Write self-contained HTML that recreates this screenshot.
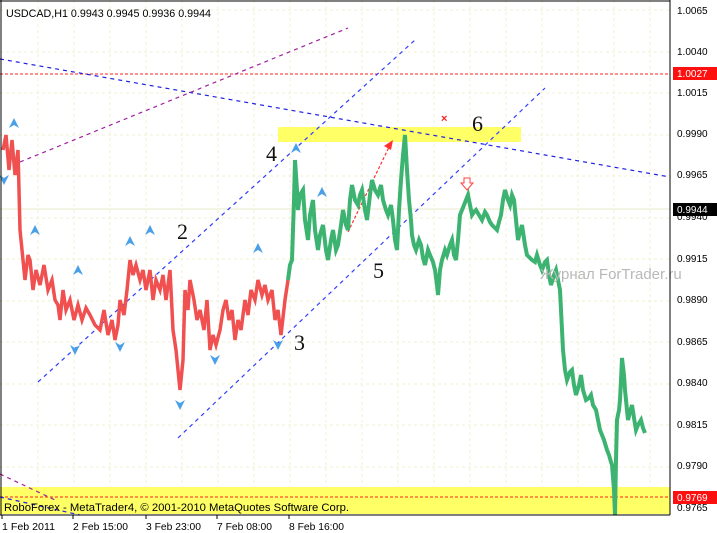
<!DOCTYPE html><html><head><style>
body{margin:0;background:#fff;}
svg{display:block;font-family:"Liberation Sans",sans-serif;}
</style></head><body>
<svg width="717" height="533" viewBox="0 0 717 533">
<rect x="0" y="0" width="717" height="533" fill="#fff"/>
<g stroke="#f0f0d0" stroke-dasharray="3,3" stroke-width="1">
<line x1="38" y1="0" x2="38" y2="515"/><line x1="74" y1="0" x2="74" y2="515"/><line x1="110" y1="0" x2="110" y2="515"/><line x1="146" y1="0" x2="146" y2="515"/><line x1="182" y1="0" x2="182" y2="515"/><line x1="218" y1="0" x2="218" y2="515"/><line x1="254" y1="0" x2="254" y2="515"/><line x1="290" y1="0" x2="290" y2="515"/><line x1="326" y1="0" x2="326" y2="515"/><line x1="362" y1="0" x2="362" y2="515"/><line x1="398" y1="0" x2="398" y2="515"/><line x1="434" y1="0" x2="434" y2="515"/><line x1="470" y1="0" x2="470" y2="515"/><line x1="506" y1="0" x2="506" y2="515"/><line x1="542" y1="0" x2="542" y2="515"/><line x1="578" y1="0" x2="578" y2="515"/><line x1="614" y1="0" x2="614" y2="515"/><line x1="650" y1="0" x2="650" y2="515"/>
<line x1="0" y1="10" x2="670" y2="10"/><line x1="0" y1="52" x2="670" y2="52"/><line x1="0" y1="93" x2="670" y2="93"/><line x1="0" y1="135" x2="670" y2="135"/><line x1="0" y1="176" x2="670" y2="176"/><line x1="0" y1="218" x2="670" y2="218"/><line x1="0" y1="259" x2="670" y2="259"/><line x1="0" y1="301" x2="670" y2="301"/><line x1="0" y1="342" x2="670" y2="342"/><line x1="0" y1="384" x2="670" y2="384"/><line x1="0" y1="425" x2="670" y2="425"/><line x1="0" y1="467" x2="670" y2="467"/>
</g>
<rect x="278" y="127" width="243" height="15" fill="#ffff66"/>
<rect x="0" y="487" width="670" height="27" fill="#ffff66"/>
<line x1="0" y1="74" x2="670" y2="74" stroke="#ff2020" stroke-dasharray="3,2"/>
<line x1="0" y1="497" x2="670" y2="497" stroke="#ff2020" stroke-dasharray="3,2"/>
<line x1="0" y1="209" x2="670" y2="209" stroke="#e8e8c8"/>
<g fill="none" stroke-dasharray="4,4" stroke-width="1.2">
<line x1="0" y1="59" x2="670" y2="177" stroke="#2020e0"/>
<line x1="20" y1="162" x2="348" y2="28" stroke="#a020a0"/>
<line x1="0" y1="474" x2="55" y2="500" stroke="#a020a0"/>
<line x1="38" y1="382" x2="415" y2="40" stroke="#3040ff"/>
<line x1="178" y1="438" x2="545" y2="88" stroke="#3040ff"/>
<line x1="0" y1="497" x2="80" y2="515" stroke="#2020e0"/>
</g>
<line x1="348" y1="232" x2="390" y2="145" stroke="#ff3030" stroke-dasharray="3,2" stroke-width="1.2"/>
<polygon points="393,140 384,146 391,150" fill="#ff3030"/>
<polyline fill="none" stroke="#f05050" stroke-width="3.5" points="3,150 6,135 9,170 12,140 15,175 18,150 20,230 23,260 25,280 28,255 30,260 33,290 36,270 40,285 44,265 48,290 52,280 55,300 58,305 60,320 63,290 66,310 70,300 74,320 78,305 82,320 86,308 90,315 95,325 100,330 104,310 108,335 112,320 115,340 118,325 120,300 124,315 127,290 130,260 133,275 136,265 140,280 143,270 146,290 150,270 153,300 156,280 160,290 163,275 166,300 170,270 173,330 176,350 180,390 183,360 185,290 188,310 190,280 194,300 197,320 200,310 204,330 207,300 210,350 213,335 216,345 220,330 223,310 226,300 229,320 232,310 235,340 238,320 241,330 245,300 248,315 251,290 255,300 258,280 262,295 265,285 268,300 272,290 275,320 278,310 281,335 285,300 288,280"/>
<polyline fill="none" stroke="#3cb371" stroke-width="4" points="288,280 290,265 292,260 294,200 295,160 297,190 298,210 300,195 303,190 305,220 308,240 310,215 313,200 315,230 318,250 320,235 323,225 326,250 328,260 331,240 333,230 336,250 338,245 341,225 343,210 346,225 348,230 350,200 352,185 355,200 358,205 360,195 362,190 365,210 367,220 370,195 372,180 375,190 378,195 381,185 383,200 386,210 388,215 391,205 393,220 395,240 397,250 399,210 401,180 403,155 405,135 407,170 409,200 411,220 412,235 414,245 416,250 419,240 421,245 423,258 425,265 428,250 430,255 433,262 435,270 437,285 438,295 440,270 442,260 445,250 447,255 450,245 452,240 454,255 456,260 458,240 460,215 462,210 464,205 466,200 468,195 470,205 472,215 474,212 476,210 479,215 482,220 485,212 487,215 490,222 492,225 495,228 497,230 499,222 501,215 503,200 505,190 508,200 510,205 512,195 514,200 516,220 518,240 520,232 522,225 525,245 527,255 530,258 532,260 535,262 537,255 540,265 542,270 545,262 547,260 549,275 551,285 554,275 556,270 558,280 560,290 562,330 563,350 565,370 567,380 570,372 572,370 574,385 576,395 579,385 581,375 583,390 586,400 589,398 591,395 593,405 596,410 598,420 600,430 602,435 604,440 607,450 609,455 611,462 612,465 614,490 615,515 616,460 617,420 619,410 620,400 621,380 622,358 624,375 625,390 627,410 628,420 630,412 632,405 634,418 636,430 638,425 641,420 643,428 645,433"/>
<g fill="#4aa0e8">
<path d="M14,118 l-5,10 5,-3 5,3z"/><path d="M296,143 l-5,10 5,-3 5,3z"/><path d="M322,187 l-5,10 5,-3 5,3z"/><path d="M150,225 l-5,10 5,-3 5,3z"/><path d="M130,236 l-5,10 5,-3 5,3z"/><path d="M78,265 l-5,10 5,-3 5,3z"/><path d="M35,225 l-5,10 5,-3 5,3z"/><path d="M258,243 l-5,10 5,-3 5,3z"/>
<path d="M4,185 l-5,-10 5,3 5,-3z"/><path d="M75,355 l-5,-10 5,3 5,-3z"/><path d="M180,410 l-5,-10 5,3 5,-3z"/><path d="M278,350 l-5,-10 5,3 5,-3z"/><path d="M215,365 l-5,-10 5,3 5,-3z"/><path d="M120,352 l-5,-10 5,3 5,-3z"/>
</g>
<path d="M464,178 h6 v5 h3 l-6,7 -6,-7 h3z" fill="#fff" stroke="#ff4040"/>
<text x="441" y="122" fill="#ff2020" font-size="11" font-weight="bold">×</text>
<g font-family="'Liberation Serif',serif" font-size="22" fill="#111">
<text x="177" y="239">2</text><text x="266" y="161">4</text><text x="294" y="350">3</text><text x="373" y="278">5</text><text x="472" y="131">6</text>
</g>
<text x="540" y="279" font-size="15" fill="#b8b8b8">Журнал ForTrader.ru</text>
<text x="6" y="17" font-size="11" fill="#000" textLength="205" lengthAdjust="spacingAndGlyphs">USDCAD,H1  0.9943 0.9945 0.9936 0.9944</text>
<text x="4" y="511" font-size="11" fill="#000" textLength="345" lengthAdjust="spacingAndGlyphs">RoboForex - MetaTrader4, © 2001-2010 MetaQuotes Software Corp.</text>
<line x1="670" y1="0" x2="670" y2="515" stroke="#000"/>
<line x1="0" y1="515" x2="670" y2="515" stroke="#000"/>
<line x1="1" y1="0" x2="1" y2="515" stroke="#000"/>
<line x1="0" y1="1" x2="670" y2="1" stroke="#000"/>
<g font-size="10" fill="#000">
<text x="677" y="14">1.0065</text><text x="677" y="55">1.0040</text><text x="677" y="96">1.0015</text><text x="677" y="137">0.9990</text><text x="677" y="178">0.9965</text><text x="677" y="220">0.9940</text><text x="677" y="262">0.9915</text><text x="677" y="303">0.9890</text><text x="677" y="345">0.9865</text><text x="677" y="386">0.9840</text><text x="677" y="428">0.9815</text><text x="677" y="469">0.9790</text><text x="677" y="511">0.9765</text>
<text x="2" y="530" textLength="53" lengthAdjust="spacingAndGlyphs">1 Feb 2011</text><text x="73" y="530" textLength="55" lengthAdjust="spacingAndGlyphs">2 Feb 15:00</text><text x="146" y="530" textLength="55" lengthAdjust="spacingAndGlyphs">3 Feb 23:00</text><text x="217" y="530" textLength="55" lengthAdjust="spacingAndGlyphs">7 Feb 08:00</text><text x="289" y="530" textLength="55" lengthAdjust="spacingAndGlyphs">8 Feb 16:00</text>
</g>
<rect x="673" y="67" width="44" height="13" fill="#ff1010"/>
<text x="677" y="77" font-size="10" fill="#fff">1.0027</text>
<rect x="673" y="203" width="44" height="13" fill="#000"/>
<text x="677" y="213" font-size="10" fill="#fff">0.9944</text>
<rect x="673" y="491" width="44" height="13" fill="#ff1010"/>
<text x="677" y="501" font-size="10" fill="#fff">0.9769</text>
<g stroke="#000"><line x1="2" y1="515" x2="2" y2="519"/><line x1="73" y1="515" x2="73" y2="519"/><line x1="146" y1="515" x2="146" y2="519"/><line x1="217" y1="515" x2="217" y2="519"/><line x1="289" y1="515" x2="289" y2="519"/></g>
</svg>
</body></html>
